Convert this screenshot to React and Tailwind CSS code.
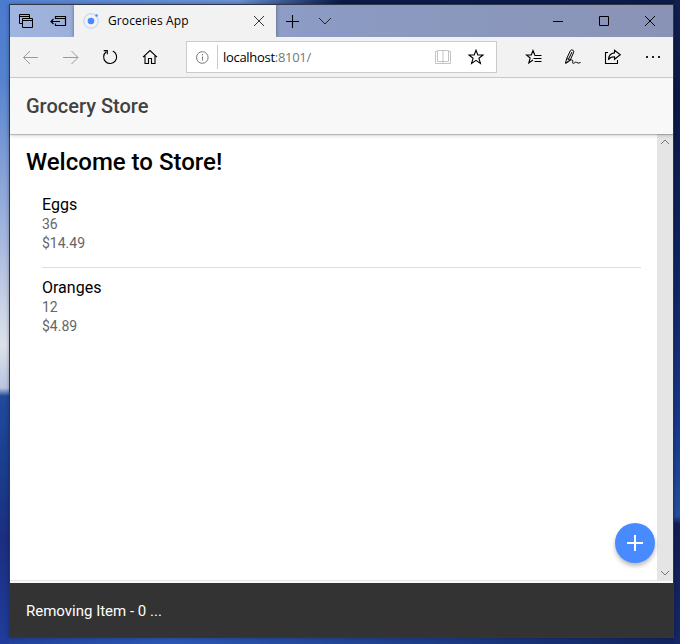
import React from 'react';

function Icon({ w = 20, h = 20, className = '', sw = 1, children }) {
  return (
    <svg width={w} height={h} viewBox={`0 0 ${w} ${h}`} fill="none" stroke="currentColor" strokeWidth={sw} className={`block shrink-0 ${className}`}>
      {children}
    </svg>
  );
}

const star = 'M8 1.2 L9.8 6 H15 L10.9 9.2 L12.4 14.4 L8 11.3 L3.6 14.4 L5.1 9.2 L1 6 H6.2 Z';

function TabBar() {
  return (
    <div className="flex h-8 shrink-0 bg-linear-to-r from-[#a0b5df] via-[#8c9bc4] via-45% to-[#8993b5] text-black">
      <div className="flex w-16 items-center pl-[9px]">
        <Icon w={15} h={14}>
          <path d="M3 9.5H.5V.5H10.5V4M.5 2.5H10.5" />
          <path d="M3.5 4.5H13.5V13.5H3.5ZM3.5 6.5H13.5" />
        </Icon>
        <Icon w={18} h={16} sw={1.2} className="ml-4">
          <path d="M5.5 6V3.5H15.5V12.5H5.5V10.5M5.5 5.5H15.5M1 8.5H10M3.5 6L1 8.5L3.5 11" />
        </Icon>
      </div>
      <div className="z-10 flex w-[202px] items-center bg-[#f2f2f2] pl-[9px] shadow-[0_0_4px_#0006] [clip-path:inset(0_-5px_0_-5px)]">
        <Icon w={16} h={16}>
          <circle cx="8" cy="8" r="7.3" stroke="#b8d0f8" />
          <circle cx="8" cy="8" r="3.3" fill="#488aff" stroke="none" />
          <circle cx="13.5" cy="2.5" r="1.3" fill="#488aff" stroke="none" />
        </Icon>
        <span className="ml-[9px] w-[145px] whitespace-nowrap font-['Open_Sans','Noto_Sans',sans-serif] text-[12px] leading-4 tracking-[0.12px]">Groceries App</span>
        <Icon w={12} h={12} className="text-[#333]"><path d="M1 1L11 11M11 1L1 11" /></Icon>
      </div>
      <div className="flex flex-1 items-center pl-[10px]">
        <Icon w={13} h={13} sw={1.1}><path d="M6.5 0V13M0 6.5H13" /></Icon>
        <Icon w={14} h={8} className="ml-[19px] text-[#222]"><path d="M1 1L7 7L13 1" /></Icon>
      </div>
      <div className="flex items-center pr-[17px]">
        <Icon w={12} h={12}><path d="M1 6.5H11" /></Icon>
        <Icon w={12} h={12} className="ml-[34px]"><path d="M1.5 1.5H10.5V10.5H1.5Z" /></Icon>
        <Icon w={12} h={12} className="ml-[34px]"><path d="M1 1L11 11M11 1L1 11" /></Icon>
      </div>
    </div>
  );
}

function Toolbar() {
  return (
    <div className="flex h-[41px] shrink-0 items-center border-b border-[#cbcbcb] bg-[#f2f2f2] text-black">
      <Icon w={16} h={14} className="ml-[13px] text-[#999]"><path d="M0 7.5H15M7 1L.5 7.5L7 14" /></Icon>
      <Icon w={16} h={14} className="ml-6 text-[#999]"><path d="M0 7.5H15M8.5 1L15 7.5L8.5 14" /></Icon>
      <Icon w={16} h={16} sw={1.1} className="ml-[23px]">
        <path d="M4.3 2.8A6.5 6.5 0 1 0 10.8 2.1M1.7 1.6H5.3V5.3" />
      </Icon>
      <Icon w={16} h={16} sw={1.1} className="ml-6"><path d="M1 8.2L8 1.6L15 8.2M3 6.7V14.5H6.5V9.5H9.5V14.5H13V6.7" /></Icon>
      <div className="ml-7 flex h-8 w-[311px] items-center border border-[#cbcbcb] bg-white">
        <Icon w={14} h={14} className="ml-[8px] text-[#777]"><circle cx="7.3" cy="7.5" r="5.8" /><path d="M7.5 6.5V10.5M7.5 4V5.3" /></Icon>
        <div className="ml-2 h-6 w-px bg-[#cbcbcb]" />
        <span className="ml-[5px] w-[212px] whitespace-nowrap font-['Open_Sans','Noto_Sans',sans-serif] text-[13px] leading-5 tracking-[-0.3px]">localhost<span className="text-[#777]">:8101/</span></span>
        <Icon w={16} h={16} className="text-[#c4c4c4]"><path d="M2.5 1.5H8V12.5H2.5ZM8 1.5H13.5V12.5H8M2.5 2.5H.5V14.5H15.5V2.5H13.5M8 12V15" /></Icon>
        <Icon w={16} h={16} sw={1.1} className="ml-[17px]"><path d={star} /></Icon>
      </div>
      <Icon w={18} h={16} sw={1.1} className="ml-7">
        <path d="M9.8 6L8 1.5L6.3 6H1.5L5.2 9L3.8 14L8 11M9.5 6.5H16.5M8.5 9.5H16.5M9.5 12.5H16.5" />
      </Icon>
      <Icon w={18} h={16} className="ml-[21px]">
        <path d="M1.5 14L2.7 9.5L6.3 1.8Q7.2.4 8.8 1.1Q10.3 2 9.5 3.8L6.2 11L1.5 14M2.7 9.5L6 11M4.5 10L8 3" />
        <path d="M1.5 14.5C4.5 13.5 7 9.7 8.5 11.2C9.5 12.5 7.5 14.5 9.5 14.3C11 14 11.5 12.3 12.7 13.4Q14 14.8 16.5 13.5" />
      </Icon>
      <Icon w={18} h={16} sw={1.1} className="ml-[22px]">
        <path d="M4 3.5H1.5V14.5H13.5V11M10.5 1.3L16.3 5.8L10.5 10.3V7.8Q6.4 7.7 4.4 10.8Q5 4.4 10.5 3.9Z" />
      </Icon>
      <Icon w={16} h={4} className="ml-6"><g fill="#222" stroke="none"><rect x="0" y="1" width="2" height="2" /><rect x="6" y="1" width="2" height="2" /><rect x="12" y="1" width="2" height="2" /></g></Icon>
    </div>
  );
}

const groceries = [
  { name: 'Eggs', quantity: 36, price: '$14.49' },
  { name: 'Oranges', quantity: 12, price: '$4.89' },
];

function Groceries() {
  return (
    <div className="relative flex min-h-0 flex-1 bg-white">
      <main className="flex-1 pl-4">
        <h1 className="pt-3 text-[24px] font-medium leading-8 text-black">Welcome to Store!</h1>
        <ul className="mt-[7px] mr-4 pl-4">
          {groceries.map((item) => (
            <li key={item.name} className="h-[83px] border-b border-[#dedede] pt-[10px] last:border-0">
              <h2 className="text-[16px] leading-5 text-black">{item.name}</h2>
              <p className="text-[14px] leading-[19px] text-[#666]">{item.quantity}</p>
              <p className="text-[14px] leading-[19px] text-[#666]">{item.price}</p>
            </li>
          ))}
        </ul>
      </main>
      <div className="-mb-px flex w-4 flex-col items-center justify-between bg-[#e5e5e5] pt-[5px] pb-[5px] text-[#777]">
        <Icon w={10} h={6}><path d="M1 5L5 1L9 5" /></Icon>
        <Icon w={10} h={6}><path d="M1 1L5 5L9 1" /></Icon>
      </div>
      <button className="absolute right-[18px] bottom-[17px] flex size-10 items-center justify-center rounded-full bg-[#488aff] text-white shadow-[0_3px_4px_#0004]">
        <Icon w={16} h={16} sw={2}><path d="M8 0V16M0 8H16" /></Icon>
      </button>
    </div>
  );
}

export default function App() {
  return (
    <div className="relative h-[644px] w-[680px] overflow-hidden bg-linear-to-r from-[#21409a] via-[#2c58b5] via-25% to-[#12245e] font-[Roboto,sans-serif]">
      <div className="absolute inset-x-0 top-0 h-1 bg-linear-to-r from-[#5382d2] via-[#6c92d3] via-35% to-[#0c1b4d] to-50%" />
      <div className="absolute inset-y-0 left-0 w-[9px] bg-[linear-gradient(180deg,#4b7bcf_0px,#5683cf_80px,#7f9dd6_160px,#a6b8df_240px,#dde1eb_345px,#b8c5df_388px,#214a9c_396px,#1c4293_440px,#1b2f80_540px,#203c9c_644px)]" />
      <div className="absolute inset-y-0 right-0 w-[6px] bg-[linear-gradient(180deg,#10204f_0px,#0b1945_100px,#10286a_300px,#17388a_420px,#24509e_516px,#101e54_524px,#142867_644px)]" />
      <div className="relative mt-1 ml-[9px] flex h-[634px] w-[665px] flex-col border border-[#30364a] shadow-[0_0_4px_#0005]">
        <TabBar />
        <Toolbar />
        <header className="z-10 flex h-14 shrink-0 items-center bg-[#f8f8f8] pl-4 text-[20px] font-medium text-[#424242] shadow-[0_1px_1px_#0003,0_2px_4px_#0002]">Grocery Store</header>
        <Groceries />
        <div className="flex h-[3px] shrink-0 border-t border-[#e5e5e5] bg-[#f8f8f8]" />
        <div className="flex h-[54px] shrink-0 items-center bg-[#333] pt-[2px] pl-4 text-[15px] text-white">Removing Item - 0 ...</div>
      </div>
    </div>
  );
}
